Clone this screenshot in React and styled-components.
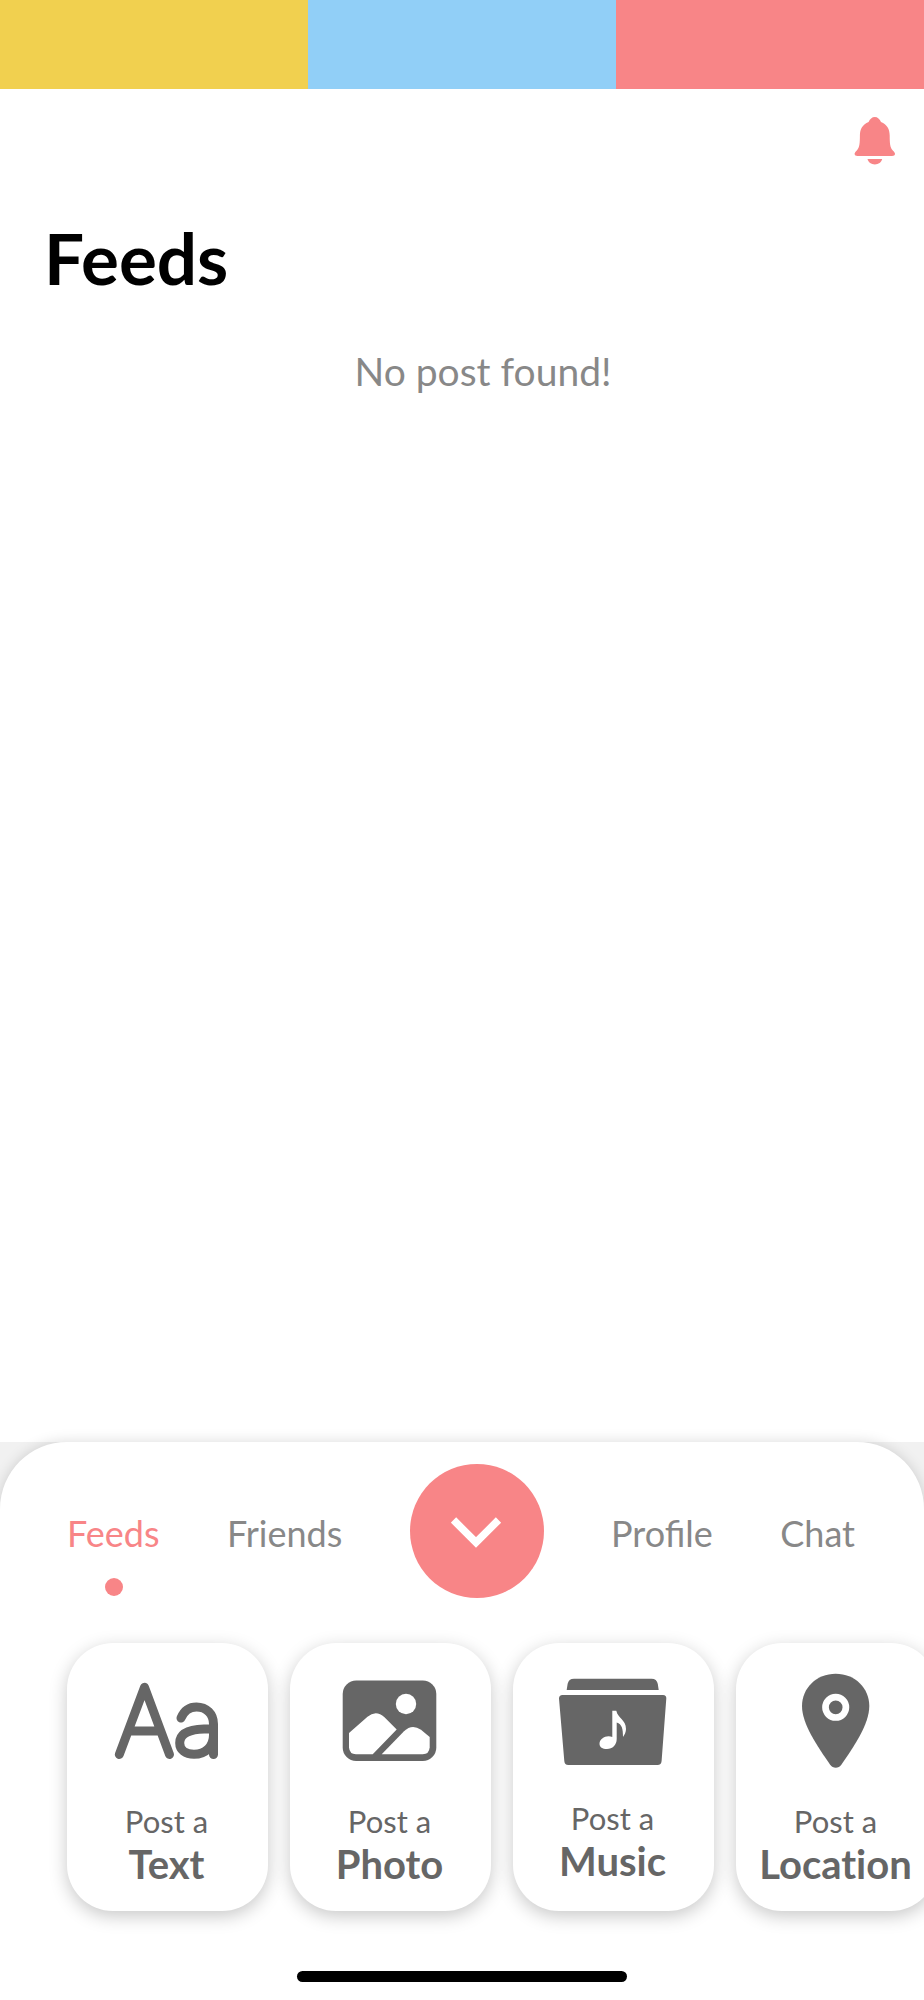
import React from "react";
import styled, { createGlobalStyle } from "styled-components";

const coral = "#f88587";
const ink = "#666666";
const muted = "#888888";

const GlobalStyle = createGlobalStyle`
  *, *::before, *::after { box-sizing: border-box; }
  body {
    margin: 0;
    background: #ffffff;
    font-family: Lato, "Liberation Sans", sans-serif;
  }
`;

const Page = styled.div`
  display: flex;
  flex-direction: column;
  min-height: 100vh;
  overflow-x: hidden;
`;

const Stripes = styled.div`
  display: grid;
  grid-template-columns: repeat(3, 1fr);
  height: 89px;
`;

const Stripe = styled.span`
  background: ${(p) => p.$color};
`;

const TopBar = styled.header`
  display: flex;
  justify-content: flex-end;
  padding: 28px 28px 0;
`;

const IconButton = styled.button`
  display: flex;
  padding: 0;
  border: 0;
  background: none;
  color: ${coral};
  cursor: pointer;
`;

const Main = styled.main`
  flex: 1;
  padding: 50px 44px 0;
`;

const Title = styled.h1`
  margin: 0;
  font-size: 71px;
  line-height: 86px;
  font-weight: 700;
  color: #000000;
`;

const EmptyMessage = styled.p`
  margin: 46px 0 0;
  padding-left: 42px;
  font-size: 39px;
  line-height: 48px;
  text-align: center;
  color: ${muted};
`;

const SheetBackdrop = styled.div`
  position: relative;
  background: #f1f1f1;
`;

const Sheet = styled.footer`
  padding: 22px 0 18px;
  border-radius: 67px 67px 0 0;
  background: #ffffff;
  box-shadow: 0 0 14px rgba(0, 0, 0, 0.15);
`;

const Nav = styled.nav`
  display: flex;
  align-items: center;
  justify-content: space-between;
  padding: 0 69px 0 67px;
`;

const NavLink = styled.a`
  position: relative;
  padding-top: 4px;
  font-size: 36px;
  line-height: 44px;
  text-decoration: none;
  color: ${(p) => (p.$active ? coral : muted)};
`;

const ActiveDot = styled.span`
  position: absolute;
  top: 71px;
  left: 50%;
  width: 18px;
  height: 18px;
  margin-left: -8px;
  border-radius: 50%;
  background: ${coral};
`;

const ToggleButton = styled.button`
  display: flex;
  align-items: center;
  justify-content: center;
  width: 134px;
  height: 134px;
  padding: 0;
  border: 0;
  border-radius: 50%;
  background: ${coral};
  cursor: pointer;
`;

const CardRow = styled.div`
  display: flex;
  gap: 22px;
  padding: 45px 67px 60px;
  overflow-x: auto;
  scrollbar-width: none;
`;

const Card = styled.button`
  display: flex;
  flex: none;
  flex-direction: column;
  align-items: center;
  width: 201px;
  height: 268px;
  padding: 20px 0 0;
  border: 0;
  border-radius: 46px;
  background: #ffffff;
  box-shadow: 0 5px 18px rgba(0, 0, 0, 0.22);
  font-family: inherit;
  color: ${ink};
  cursor: pointer;
`;

const CardIcon = styled.svg`
  display: block;
  flex: none;
`;

const Caption = styled.span`
  display: flex;
  flex-direction: column;
  align-items: center;
  padding: 34px 2px 0 0;
`;

const CardLead = styled.span`
  font-size: 31px;
  line-height: 38px;
`;

const CardName = styled.span`
  font-size: 40px;
  line-height: 48px;
  font-weight: 700;
  font-variant-ligatures: none;
`;

const HomeIndicator = styled.div`
  width: 330px;
  height: 11px;
  margin: 0 auto;
  border-radius: 6px;
  background: #000000;
`;

function BellIcon() {
  return (
    <svg width="42" height="48" viewBox="0 0 42 48" fill="currentColor" aria-hidden="true">
      <path d="M20.8 0C23.500 0 25.800 2 27 5C33 7.500 35.700 12 35.700 18.500C35.700 26 36 30.500 38.800 33.500C40.400 35.200 41 35.800 41 37C41 38.300 39.800 39 38 39H3.600C1.800 39 .6 38.300 .6 37C.6 35.800 1.200 35.200 2.800 33.500C5.600 30.500 5.900 26 5.900 18.500C5.900 12 8.600 7.500 14.600 5C15.800 2 18.100 0 20.800 0Z" />
      <path d="M13.500 42H28.200C27.300 45.300 24.500 47.400 20.800 47.400C17.200 47.400 14.400 45.300 13.500 42Z" />
    </svg>
  );
}

function ChevronIcon() {
  return (
    <svg width="52" height="34" viewBox="0 0 52 34" fill="none" stroke="#ffffff" strokeWidth="7.500" aria-hidden="true">
      <path d="M2.500 6L25 28.500L47.500 6" />
    </svg>
  );
}

const glyphs = {
  text: (
    <g fill="none" stroke={ink} strokeWidth="9" strokeLinecap="round" strokeLinejoin="round">
      <path d="M12.300 91.500L37.500 24.300L62.500 91.500M21.200 68H53.700" />
      <path d="M74 55C77 48 82.500 44 89.500 44C99.500 44 106.500 51 106.500 61V91.500" />
      <path d="M106.500 66H97C81.500 66.500 72.700 71 72.700 80C72.700 87 78.500 91.300 87 91.300C98.500 91.300 106.500 83.500 106.500 72" />
    </g>
  ),
  photo: (
    <>
      <rect x="12.700" y="17.600" width="93.600" height="80.400" rx="13.500" fill={ink} />
      <g fill="#ffffff">
        <circle cx="76" cy="41" r="10.200" />
        <path d="M19 70L37.500 53.800Q46 46.300 54.500 54.300L66.700 66.600L42.700 91.300H26Q19.500 91.300 19 84.600Z" />
        <path d="M51.700 91.300L74 68.300Q82 60.300 91 66.800L99.700 74V84.300Q99.200 91.300 92.700 91.300Z" />
      </g>
    </>
  ),
  music: (
    <>
      <g fill={ink}>
        <path d="M13.700 27L14.600 21Q15.600 15.700 21 15.700H98.500Q103.800 15.700 104.800 21L105.700 27Z" />
        <path d="M9.500 32H110Q113.500 32 113.300 35.500L108.600 98Q108.300 102 104.500 102H15.300Q11.600 102 11.300 98L6 35.500Q6 32 9.500 32Z" />
      </g>
      <path
        d="M59.300 47.700H63.300C65 55.500 73 56.500 73 66C73 69 71.500 72 70 74C70 66 69 61 63.700 59.500V76C63.700 82 59.500 86 54 86C49.500 86 46.500 84 46.500 80.700C46.500 76.500 51 73.300 55.500 73.300C57 73.300 58.300 73.500 59.300 74Z"
        fill="#ffffff"
      />
    </>
  ),
  location: (
    <>
      <path
        d="M59.700 10.700C79 10.700 93.300 25 93.300 43C93.300 61 78 83.500 65.500 101.500C62.500 105.800 57 105.800 54 101.500C41.500 83.500 26 61 26 43C26 25 40.500 10.700 59.700 10.700Z"
        fill={ink}
      />
      <circle cx="59.700" cy="44.300" r="10.200" fill="none" stroke="#ffffff" strokeWidth="6.700" />
    </>
  ),
};

const cards = [
  { name: "Text", glyph: "text", iconHeight: 105 },
  { name: "Photo", glyph: "photo", iconHeight: 105 },
  { name: "Music", glyph: "music", iconHeight: 102 },
  { name: "Location", glyph: "location", iconHeight: 105 },
];

export default function App() {
  return (
    <>
      <GlobalStyle />
      <Page>
        <Stripes>
          <Stripe $color="#f1d04f" />
          <Stripe $color="#91cff7" />
          <Stripe $color={coral} />
        </Stripes>
        <TopBar>
          <IconButton type="button" aria-label="Notifications">
            <BellIcon />
          </IconButton>
        </TopBar>
        <Main>
          <Title>Feeds</Title>
          <EmptyMessage>No post found!</EmptyMessage>
        </Main>
        <SheetBackdrop>
          <Sheet>
            <Nav>
              <NavLink href="#feeds" $active aria-current="page">
                Feeds
                <ActiveDot />
              </NavLink>
              <NavLink href="#friends">Friends</NavLink>
              <ToggleButton type="button" aria-label="Close post menu">
                <ChevronIcon />
              </ToggleButton>
              <NavLink href="#profile">Profile</NavLink>
              <NavLink href="#chat">Chat</NavLink>
            </Nav>
            <CardRow>
              {cards.map((card) => (
                <Card key={card.name} type="button">
                  <CardIcon width="121" height={card.iconHeight} viewBox={`0 0 121 ${card.iconHeight}`} aria-hidden="true">
                    {glyphs[card.glyph]}
                  </CardIcon>
                  <Caption>
                    <CardLead>Post a</CardLead>
                    <CardName>{card.name}</CardName>
                  </Caption>
                </Card>
              ))}
            </CardRow>
            <HomeIndicator />
          </Sheet>
        </SheetBackdrop>
      </Page>
    </>
  );
}
